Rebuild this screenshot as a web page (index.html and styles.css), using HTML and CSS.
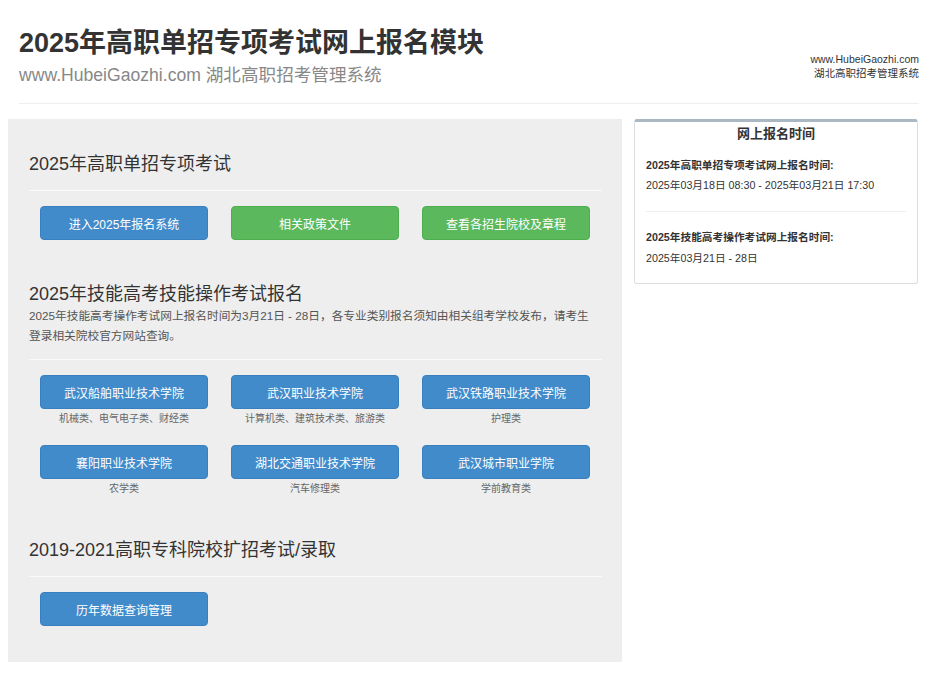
FILE: index.html
```html
<!DOCTYPE html>
<html lang="zh-CN">
<head>
<meta charset="utf-8">
<title>2025年高职单招专项考试网上报名模块</title>
<link rel="stylesheet" href="styles.css">
</head>
<body>
<div class="page">
  <header class="header">
    <div class="header-main">
      <h1 class="title">2025年高职单招专项考试网上报名模块</h1>
      <div class="subtitle">www.HubeiGaozhi.com 湖北高职招考管理系统</div>
    </div>
    <div class="header-side">
      <div>www.HubeiGaozhi.com</div>
      <div>湖北高职招考管理系统</div>
    </div>
  </header>

  <div class="layout">
    <main class="main">
      <section class="section">
        <h2 class="sec-title">2025年高职单招专项考试</h2>
        <hr class="rule">
        <div class="btn-grid">
          <a class="btn btn-blue">进入2025年报名系统</a>
          <a class="btn btn-green">相关政策文件</a>
          <a class="btn btn-green">查看各招生院校及章程</a>
        </div>
      </section>

      <section class="section">
        <h2 class="sec-title">2025年技能高考技能操作考试报名</h2>
        <p class="sec-desc">2025年技能高考操作考试网上报名时间为3月21日 - 28日，各专业类别报名须知由相关组考学校发布，请考生<br>登录相关院校官方网站查询。</p>
        <hr class="rule rule-tight">
        <div class="btn-grid school-grid">
          <div class="school"><a class="btn btn-blue">武汉船舶职业技术学院</a><div class="school-note">机械类、电气电子类、财经类</div></div>
          <div class="school"><a class="btn btn-blue">武汉职业技术学院</a><div class="school-note">计算机类、建筑技术类、旅游类</div></div>
          <div class="school"><a class="btn btn-blue">武汉铁路职业技术学院</a><div class="school-note">护理类</div></div>
          <div class="school"><a class="btn btn-blue">襄阳职业技术学院</a><div class="school-note">农学类</div></div>
          <div class="school"><a class="btn btn-blue">湖北交通职业技术学院</a><div class="school-note">汽车修理类</div></div>
          <div class="school"><a class="btn btn-blue">武汉城市职业学院</a><div class="school-note">学前教育类</div></div>
        </div>
      </section>

      <section class="section">
        <h2 class="sec-title">2019-2021高职专科院校扩招考试/录取</h2>
        <hr class="rule">
        <div class="btn-grid">
          <a class="btn btn-blue">历年数据查询管理</a>
        </div>
      </section>
    </main>

    <aside class="panel">
      <div class="panel-title">网上报名时间</div>
      <div class="panel-item">
        <div class="panel-label">2025年高职单招专项考试网上报名时间:</div>
        <div class="panel-date">2025年03月18日 08:30 - 2025年03月21日 17:30</div>
      </div>
      <hr class="panel-rule">
      <div class="panel-item panel-item-2">
        <div class="panel-label">2025年技能高考操作考试网上报名时间:</div>
        <div class="panel-date">2025年03月21日 - 28日</div>
      </div>
    </aside>
  </div>
</div>
</body>
</html>
```

FILE: styles.css
```css
* { box-sizing: border-box; }

html, body {
  margin: 0;
  padding: 0;
  background: #fff;
}

body {
  font-family: "Liberation Sans", Arial, "Noto Sans CJK SC", sans-serif;
  color: #333;
}

.page {
  width: 934px;
  padding: 0 8px;
}

/* header */
.header {
  display: flex;
  justify-content: space-between;
  margin: 0 7px 0 11px;
  padding: 26px 0 16px;
  border-bottom: 1px solid #eee;
}

.title {
  margin: 0;
  font-size: 27px;
  line-height: 34px;
  font-weight: bold;
  color: #333;
}

.subtitle {
  margin-top: 3px;
  font-size: 17.6px;
  line-height: 24px;
  color: #888;
}

.header-side {
  align-self: flex-end;
  margin-bottom: 7px;
  text-align: right;
  font-size: 10.5px;
  line-height: 14px;
  color: #333;
}

/* layout */
.layout {
  display: flex;
  align-items: flex-start;
  gap: 12px;
  margin-top: 15px;
}

.main {
  width: 614px;
  background: #eee;
  padding: 35px 20px 36px 21px;
}

.section + .section {
  margin-top: 44px;
}

.sec-title {
  margin: 0;
  font-size: 18px;
  line-height: 20px;
  font-weight: normal;
  color: #333;
}

.sec-desc {
  margin: 2px 0 0;
  font-size: 11.7px;
  line-height: 20px;
  color: #555;
  white-space: nowrap;
}

.rule {
  margin: 16px 0 15px;
  border: 0;
  border-top: 1px solid #fafafa;
  height: 0;
}

.rule-tight {
  margin-top: 13px;
}

.btn-grid {
  display: grid;
  grid-template-columns: repeat(3, 168px);
  column-gap: 23px;
  margin-left: 11px;
}

.school-grid {
  row-gap: 19px;
}

.btn {
  display: flex;
  align-items: center;
  justify-content: center;
  height: 34px;
  border-radius: 4px;
  font-size: 12px;
  color: #fff;
  text-decoration: none;
}

.btn-blue {
  background: #428bca;
  border: 1px solid #3a7fbd;
}

.btn-green {
  background: #5cb85c;
  border: 1px solid #4cae4c;
}

.school-note {
  margin-top: 3px;
  text-align: center;
  font-size: 10px;
  line-height: 14px;
  color: #666;
}

/* side panel */
.panel {
  width: 284px;
  background: #fff;
  border: 1px solid #ddd;
  border-top: 3px solid #aab8c4;
  border-radius: 3px;
  padding: 3px 11px 17px;
}

.panel-title {
  text-align: center;
  font-size: 13px;
  line-height: 18px;
  font-weight: bold;
  color: #333;
}

.panel-item {
  margin-top: 14px;
}

.panel-item-2 {
  margin-top: 17px;
}

.panel-label {
  font-size: 10.7px;
  line-height: 16px;
  font-weight: bold;
  color: #333;
}

.panel-date {
  margin-top: 4px;
  font-size: 10.7px;
  line-height: 16px;
  color: #333;
}

.panel-item-2 .panel-date {
  margin-top: 5px;
}

.panel-rule {
  margin: 18px 0 0;
  border: 0;
  border-top: 1px solid #eee;
  height: 0;
}
```
